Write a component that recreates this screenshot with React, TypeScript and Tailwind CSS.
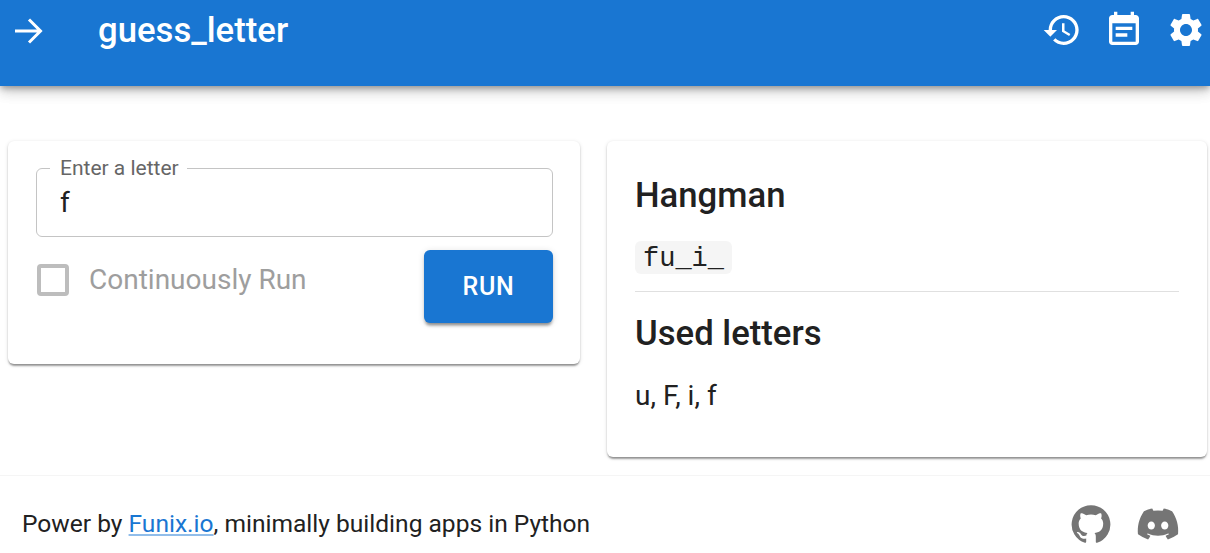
import React from "react";
import { FaDiscord } from "react-icons/fa";

const HISTORY = "M13 3c-4.97 0-9 4.03-9 9H1l3.89 3.89.07.14L9 12H6c0-3.87 3.13-7 7-7s7 3.13 7 7-3.13 7-7 7c-1.93 0-3.68-.79-4.94-2.06l-1.42 1.42C8.27 19.99 10.51 21 13 21c4.97 0 9-4.03 9-9s-4.03-9-9-9zm-1 5v5l4.28 2.54.72-1.21-3.5-2.08V8H12z";
const EVENT_NOTE = "M17 10H7v2h10v-2zm2-7h-1V1h-2v2H8V1H6v2H5c-1.11 0-1.99.9-1.99 2L3 19c0 1.1.89 2 2 2h14c1.1 0 2-.9 2-2V5c0-1.1-.9-2-2-2zm0 16H5V8h14v11zm-5-5H7v2h7v-2z";
const SETTINGS = "M19.14 12.94c.04-.3.06-.61.06-.94 0-.32-.02-.64-.07-.94l2.03-1.58c.18-.14.23-.41.12-.61l-1.92-3.32c-.12-.22-.37-.29-.59-.22l-2.39.96c-.5-.38-1.03-.7-1.62-.94l-.36-2.54c-.04-.24-.24-.41-.48-.41h-3.84c-.24 0-.43.17-.47.41l-.36 2.54c-.59.24-1.13.57-1.62.94l-2.39-.96c-.22-.08-.47 0-.59.22L2.74 8.87c-.12.21-.08.47.12.61l2.03 1.58c-.05.3-.09.63-.09.94s.02.64.07.94l-2.03 1.58c-.18.14-.23.41-.12.61l1.92 3.32c.12.22.37.29.59.22l2.39-.96c.5.38 1.03.7 1.62.94l.36 2.54c.05.24.24.41.48.41h3.84c.24 0 .44-.17.47-.41l.36-2.54c.59-.24 1.13-.56 1.62-.94l2.39.96c.22.08.47 0 .59-.22l1.92-3.32c.12-.22.07-.47-.12-.61l-2.01-1.58zM12 15.6c-1.98 0-3.6-1.62-3.6-3.6s1.62-3.6 3.6-3.6 3.6 1.62 3.6 3.6-1.62 3.6-3.6 3.6z";
const GITHUB = "M12 1.27a11 11 0 00-3.48 21.46c.55.09.73-.28.73-.55v-1.84c-3.03.64-3.67-1.46-3.67-1.46-.55-1.29-1.28-1.65-1.28-1.65-.92-.65.1-.65.1-.65 1.1 0 1.73 1.1 1.73 1.1.92 1.65 2.57 1.2 3.21.92a2 2 0 01.64-1.47c-2.47-.27-5.04-1.19-5.04-5.5 0-1.1.46-2.1 1.2-2.84a3.76 3.76 0 010-2.93s.91-.28 3.11 1.1c1.8-.49 3.7-.49 5.5 0 2.1-1.38 3.02-1.1 3.02-1.1a3.76 3.76 0 010 2.93c.83.74 1.2 1.74 1.2 2.94 0 4.21-2.57 5.13-5.04 5.4.45.37.82.92.82 2.02v3.03c0 .27.1.64.73.55A11 11 0 0012 1.27";

const Icon = ({ d, className }: { d: string; className: string }) => (
  <svg viewBox="0 0 24 24" fill="currentColor" className={className} aria-hidden="true">
    <path d={d} />
  </svg>
);

const App: React.FC = () => {
  return (
    <div className="h-[553px] overflow-hidden bg-white font-['Roboto',sans-serif] text-[#212121]">
      <header className="flex h-[86px] items-start bg-[#1976d2] text-white shadow-[0_3px_6px_-1px_rgba(0,0,0,0.3),0_6px_12px_0_rgba(0,0,0,0.14),0_1px_18px_0_rgba(0,0,0,0.12)]">
        <svg viewBox="0 0 28 26" fill="none" stroke="currentColor" strokeWidth="3" className="ml-[15px] mt-[18px] h-[26px] w-[28px]" aria-hidden="true">
          <path d="M0 13h26M14 1.5 25.5 13 14 24.5" />
        </svg>
        <h1 className="ml-[55px] mt-[9px] text-[34.7px] font-medium leading-[42px]">guess_letter</h1>
        <div className="ml-auto mr-[4px] mt-[10px] flex gap-[22px]">
          <Icon d={HISTORY} className="size-10" />
          <Icon d={EVENT_NOTE} className="size-10" />
          <Icon d={SETTINGS} className="size-10" />
        </div>
      </header>

      <main className="flex items-start gap-[27px] pl-2 pr-[3px] pt-[55px]">
        <section className="w-[572px] rounded-md bg-white pb-[41px] pl-7 pr-[27px] pt-[15px] shadow-[0_3px_2px_-1px_rgba(0,0,0,0.3),0_1px_2px_0_rgba(0,0,0,0.14),0_1px_4px_0_rgba(0,0,0,0.12)]">
          <fieldset className="h-[81px] rounded-md border border-[#c4c4c4] px-[13px]">
            <legend className="pl-[10px] pr-2 text-[21px] leading-6 text-[#666666]">Enter a letter</legend>
            <div className="pl-[10px] text-[28px] leading-[46px]">f</div>
          </fieldset>
          <div className="mt-[13px] flex items-start justify-between">
            <label className="mt-[14px] flex items-center gap-5 pl-px text-[28px] leading-8 text-[#9e9e9e]">
              <span className="size-8 rounded border-[4px] border-[#bdbdbd]" />
              Continuously Run
            </label>
            <button className="h-[73px] w-[129px] rounded-md bg-[#1976d2] text-[25px] font-medium tracking-[0.8px] text-white shadow-[0_4px_3px_-2px_rgba(0,0,0,0.3),0_3px_3px_0_rgba(0,0,0,0.14),0_1px_7px_0_rgba(0,0,0,0.12)]">
              RUN
            </button>
          </div>
        </section>

        <section className="w-[600px] rounded-md bg-white px-7 pb-[41px] pt-[32px] shadow-[0_3px_2px_-1px_rgba(0,0,0,0.3),0_1px_2px_0_rgba(0,0,0,0.14),0_1px_4px_0_rgba(0,0,0,0.12)]">
          <h2 className="text-[34.7px] font-medium leading-[44px]">Hangman</h2>
          <code className="mt-[24px] block h-[33px] w-[97px] rounded-md bg-[#f5f5f5] px-2 font-['Liberation_Mono',monospace] text-[27px] leading-[37px]">
            fu_i_
          </code>
          <hr className="mt-[17px] border-[#e0e0e0]" />
          <h2 className="mt-[19px] text-[34.7px] font-medium leading-[44px]">Used letters</h2>
          <p className="mt-[21px] text-[28px] leading-[40px]">u, F, i, f</p>
        </section>
      </main>

      <footer className="mt-[18px] flex items-start border-t border-[#f5f5f5] pl-[22px] pt-[33px]">
        <p className="text-[24.55px] leading-[30px]">
          Power by{" "}
          <a className="text-[#1976d2] underline decoration-[#90bdea] underline-offset-2">Funix.io</a>
          , minimally building apps in Python
        </p>
        <div className="ml-auto mr-[30px] flex items-start gap-[24px] text-[#757575]">
          <Icon d={GITHUB} className="mt-[-6px] size-[42px]" />
          <FaDiscord className="mt-[-7px] size-[44px]" />
        </div>
      </footer>
    </div>
  );
};

export default App;
